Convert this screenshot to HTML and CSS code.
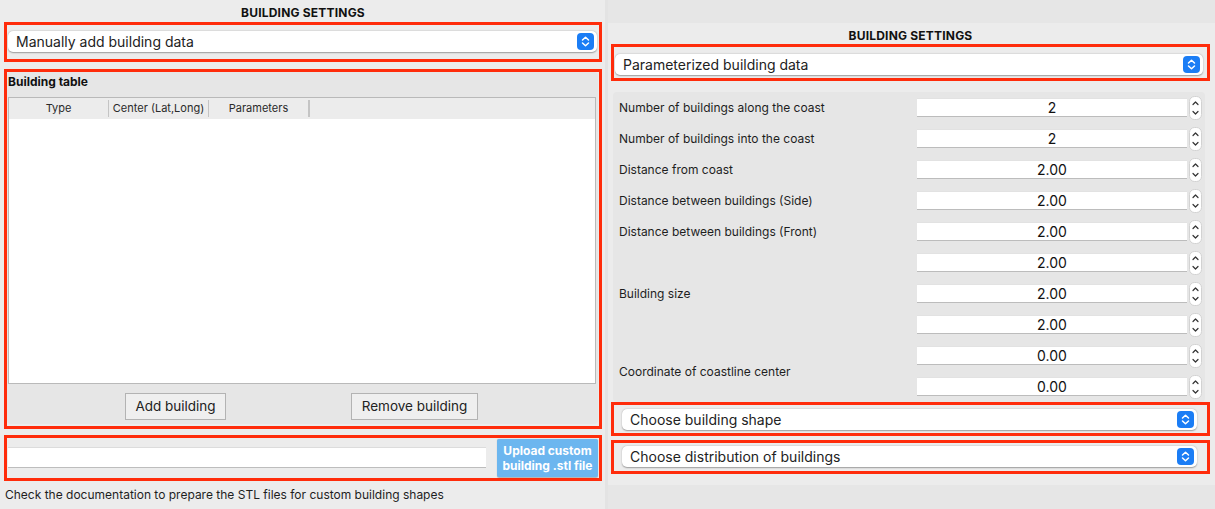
FILE: index.html
```html
<!DOCTYPE html>
<html>
<head>
<meta charset="utf-8">
<link rel="stylesheet" href="styles.css">
</head>
<body>
<div class="left">
  <div class="title">BUILDING SETTINGS</div>
  <div class="red r1">
    <div class="combo c-left"><span>Manually add building data</span>
      <svg class="cbtn" viewBox="0 0 17 17"><rect width="17" height="17" rx="4" fill="#1b7df5"/><path d="M5.5 7 L8.5 4.2 L11.5 7 M5.5 10 L8.5 12.8 L11.5 10" fill="none" stroke="#fff" stroke-width="1.5" stroke-linecap="round" stroke-linejoin="round"/></svg>
    </div>
  </div>
  <div class="red r2">
    <div class="group">
      <div class="gtitle">Building table</div>
      <div class="table">
        <div class="thead">
          <div class="th">Type</div>
          <div class="th">Center (Lat,Long)</div>
          <div class="th">Parameters</div>
          <div class="th last"></div>
        </div>
        <div class="tbody"></div>
      </div>
      <div class="btns">
        <button class="btn b-add">Add building</button>
        <button class="btn b-rem">Remove building</button>
      </div>
    </div>
  </div>
  <div class="red r3">
    <div class="field"></div>
    <button class="upload">Upload custom<br>building .stl file</button>
  </div>
  <div class="caption">Check the documentation to prepare the STL files for custom building shapes</div>
</div>
<div class="sep"></div>
<div class="right">
  <div class="panel">
    <div class="title t2">BUILDING SETTINGS</div>
    <div class="red r4">
      <div class="combo c-right"><span>Parameterized building data</span>
        <svg class="cbtn" viewBox="0 0 17 17"><rect width="17" height="17" rx="4" fill="#1b7df5"/><path d="M5.5 7 L8.5 4.2 L11.5 7 M5.5 10 L8.5 12.8 L11.5 10" fill="none" stroke="#fff" stroke-width="1.5" stroke-linecap="round" stroke-linejoin="round"/></svg>
      </div>
    </div>
    <div class="form">
      <div class="lab">Number of buildings along the coast</div>
      <div class="spins"><div class="spin"><div class="sf">2</div><svg class="sa" viewBox="0 0 13 24"><rect x="0.5" y="0.5" width="12" height="23" rx="5" fill="#fff" stroke="#d2d2d2"/><path d="M4 8.5 L6.5 6 L9 8.5 M4 15.5 L6.5 18 L9 15.5" fill="none" stroke="#333" stroke-width="1.2" stroke-linecap="round" stroke-linejoin="round"/></svg></div></div>

      <div class="lab">Number of buildings into the coast</div>
      <div class="spins"><div class="spin"><div class="sf">2</div><svg class="sa" viewBox="0 0 13 24"><rect x="0.5" y="0.5" width="12" height="23" rx="5" fill="#fff" stroke="#d2d2d2"/><path d="M4 8.5 L6.5 6 L9 8.5 M4 15.5 L6.5 18 L9 15.5" fill="none" stroke="#333" stroke-width="1.2" stroke-linecap="round" stroke-linejoin="round"/></svg></div></div>

      <div class="lab">Distance from coast</div>
      <div class="spins"><div class="spin"><div class="sf">2.00</div><svg class="sa" viewBox="0 0 13 24"><rect x="0.5" y="0.5" width="12" height="23" rx="5" fill="#fff" stroke="#d2d2d2"/><path d="M4 8.5 L6.5 6 L9 8.5 M4 15.5 L6.5 18 L9 15.5" fill="none" stroke="#333" stroke-width="1.2" stroke-linecap="round" stroke-linejoin="round"/></svg></div></div>

      <div class="lab">Distance between buildings (Side)</div>
      <div class="spins"><div class="spin"><div class="sf">2.00</div><svg class="sa" viewBox="0 0 13 24"><rect x="0.5" y="0.5" width="12" height="23" rx="5" fill="#fff" stroke="#d2d2d2"/><path d="M4 8.5 L6.5 6 L9 8.5 M4 15.5 L6.5 18 L9 15.5" fill="none" stroke="#333" stroke-width="1.2" stroke-linecap="round" stroke-linejoin="round"/></svg></div></div>

      <div class="lab">Distance between buildings (Front)</div>
      <div class="spins"><div class="spin"><div class="sf">2.00</div><svg class="sa" viewBox="0 0 13 24"><rect x="0.5" y="0.5" width="12" height="23" rx="5" fill="#fff" stroke="#d2d2d2"/><path d="M4 8.5 L6.5 6 L9 8.5 M4 15.5 L6.5 18 L9 15.5" fill="none" stroke="#333" stroke-width="1.2" stroke-linecap="round" stroke-linejoin="round"/></svg></div></div>

      <div class="lab">Building size</div>
      <div class="spins">
        <div class="spin"><div class="sf">2.00</div><svg class="sa" viewBox="0 0 13 24"><rect x="0.5" y="0.5" width="12" height="23" rx="5" fill="#fff" stroke="#d2d2d2"/><path d="M4 8.5 L6.5 6 L9 8.5 M4 15.5 L6.5 18 L9 15.5" fill="none" stroke="#333" stroke-width="1.2" stroke-linecap="round" stroke-linejoin="round"/></svg></div>
        <div class="spin"><div class="sf">2.00</div><svg class="sa" viewBox="0 0 13 24"><rect x="0.5" y="0.5" width="12" height="23" rx="5" fill="#fff" stroke="#d2d2d2"/><path d="M4 8.5 L6.5 6 L9 8.5 M4 15.5 L6.5 18 L9 15.5" fill="none" stroke="#333" stroke-width="1.2" stroke-linecap="round" stroke-linejoin="round"/></svg></div>
        <div class="spin"><div class="sf">2.00</div><svg class="sa" viewBox="0 0 13 24"><rect x="0.5" y="0.5" width="12" height="23" rx="5" fill="#fff" stroke="#d2d2d2"/><path d="M4 8.5 L6.5 6 L9 8.5 M4 15.5 L6.5 18 L9 15.5" fill="none" stroke="#333" stroke-width="1.2" stroke-linecap="round" stroke-linejoin="round"/></svg></div>
      </div>

      <div class="lab">Coordinate of coastline center</div>
      <div class="spins">
        <div class="spin"><div class="sf">0.00</div><svg class="sa" viewBox="0 0 13 24"><rect x="0.5" y="0.5" width="12" height="23" rx="5" fill="#fff" stroke="#d2d2d2"/><path d="M4 8.5 L6.5 6 L9 8.5 M4 15.5 L6.5 18 L9 15.5" fill="none" stroke="#333" stroke-width="1.2" stroke-linecap="round" stroke-linejoin="round"/></svg></div>
        <div class="spin"><div class="sf">0.00</div><svg class="sa" viewBox="0 0 13 24"><rect x="0.5" y="0.5" width="12" height="23" rx="5" fill="#fff" stroke="#d2d2d2"/><path d="M4 8.5 L6.5 6 L9 8.5 M4 15.5 L6.5 18 L9 15.5" fill="none" stroke="#333" stroke-width="1.2" stroke-linecap="round" stroke-linejoin="round"/></svg></div>
      </div>
    </div>
    <div class="red r5">
      <div class="combo c-small"><span>Choose building shape</span>
        <svg class="cbtn" viewBox="0 0 17 17"><rect width="17" height="17" rx="4" fill="#1b7df5"/><path d="M5.5 7 L8.5 4.2 L11.5 7 M5.5 10 L8.5 12.8 L11.5 10" fill="none" stroke="#fff" stroke-width="1.5" stroke-linecap="round" stroke-linejoin="round"/></svg>
      </div>
    </div>
    <div class="red r6">
      <div class="combo c-small"><span>Choose distribution of buildings</span>
        <svg class="cbtn" viewBox="0 0 17 17"><rect width="17" height="17" rx="4" fill="#1b7df5"/><path d="M5.5 7 L8.5 4.2 L11.5 7 M5.5 10 L8.5 12.8 L11.5 10" fill="none" stroke="#fff" stroke-width="1.5" stroke-linecap="round" stroke-linejoin="round"/></svg>
      </div>
    </div>
  </div>
</div>
</body>
</html>
```

FILE: styles.css
```css
* { box-sizing: border-box; }
html, body { margin: 0; padding: 0; }
body {
  width: 1215px;
  height: 509px;
  overflow: hidden;
  background: #e6e6e6;
  display: flex;
  font-family: Inter, "Liberation Sans", sans-serif;
  color: #1e1e1e;
}
.left {
  width: 605px;
  height: 509px;
  background: #ececec;
  display: flex;
  flex-direction: column;
  padding: 0 3px 0 4px;
}
.sep {
  width: 3px;
  background: #e3e3e3;
}
.right {
  flex: 1;
  padding-top: 23px;
}
.panel {
  height: 462px;
  background: #ececec;
  padding: 0 5px 0 3px;
  display: flex;
  flex-direction: column;
}
.title {
  height: 22px;
  text-align: center;
  font-weight: 700;
  font-size: 12px;
  line-height: 26px;
  letter-spacing: 0.2px;
  color: #111;
}
.t2 { height: 21px; line-height: 26px; }
.red { border: 3px solid #ff2c0b; }
.r1 { height: 40px; padding: 6px 2px 0 1px; }
.combo {
  height: 21px;
  background: #fff;
  border-radius: 5px;
  box-shadow: 0 0.5px 1.5px rgba(0,0,0,0.35);
  display: flex;
  align-items: center;
  justify-content: space-between;
  padding: 0 3px 0 8px;
  font-size: 14px;
  color: #222;
}
.cbtn { width: 17px; height: 17px; }
.r2 { height: 360px; margin-top: 7px; padding: 0; }
.group {
  height: 352px;
  margin: 0 1px 0 0;
  background: #e6e6e6;
  border-radius: 4px;
  padding: 0 0 0 1px;
  display: flex;
  flex-direction: column;
}
.gtitle {
  font-weight: 700;
  font-size: 12px;
  height: 25px;
  line-height: 20px;
  color: #111;
}
.table {
  width: 588px;
  height: 287px;
  border: 1px solid #b9b9b9;
  background: #fff;
  display: flex;
  flex-direction: column;
}
.thead {
  height: 21px;
  background: #ececec;
  display: flex;
  align-items: center;
}
.th {
  width: 100px;
  height: 17px;
  border-right: 1px solid #c4c4c4;
  font-size: 11px;
  line-height: 17px;
  text-align: center;
  color: #2a2a2a;
}
.th.last { width: 0; }
.tbody { flex: 1; background: #fff; }
.btns {
  display: flex;
  height: 40px;
  align-items: center;
  padding-top: 4px;
}
.btn {
  font-family: inherit;
  font-size: 13.5px;
  color: #222;
  background: #efefef;
  border: 1px solid #b3b3b3;
  border-radius: 0;
  height: 27px;
  padding: 0;
}
.b-add { width: 101px; margin-left: 117px; }
.b-rem { width: 127px; margin-left: 125px; }
.r3 {
  height: 46px;
  margin-top: 6px;
  display: flex;
  align-items: center;
  padding: 0 1px 0 1px;
}
.field {
  width: 478px;
  height: 21px;
  background: #fff;
  border-top: 1px solid #dcdcdc;
  border-bottom: 1px solid #bdbdbd;
  margin-top: -1px;
}
.upload {
  margin-left: 11px;
  width: 101px;
  height: 38px;
  background: #6cb6ef;
  border: none;
  border-radius: 2px;
  color: #fff;
  font-family: inherit;
  font-weight: 700;
  font-size: 12px;
  line-height: 15px;
  padding: 0;
  box-shadow: 0 0.5px 1px rgba(0,0,0,0.25);
}
.caption {
  font-size: 12px;
  margin-left: 1px;
  margin-top: 6px;
  color: #1e1e1e;
}
.r4 { height: 37px; padding: 7px 4px 0 1px; }
.r4 .combo { height: 21px; }
.form {
  margin: 11px 5px 0 2px;
  height: 310px;
  background: #e6e6e6;
  border-radius: 4px;
  display: grid;
  grid-template-columns: 298px 1fr;
  padding: 0 0 0 6px;
  row-gap: 0;
}
.lab {
  font-size: 12px;
  display: flex;
  align-items: center;
  color: #1e1e1e;
}
.spins { display: flex; flex-direction: column; }
.spin {
  height: 31px;
  display: flex;
  align-items: center;
}
.sf {
  width: 270px;
  height: 19px;
  background: #fff;
  border-bottom: 1px solid #bcbcbc;
  border-top: 1px solid #e2e2e2;
  text-align: center;
  font-size: 14px;
  line-height: 18px;
  color: #111;
}
.sa { width: 13px; height: 24px; margin-left: 2px; }
.r5 { height: 34px; margin-top: 0; padding: 4px 10px 0 8px; }
.r6 { height: 34px; margin-top: 4px; padding: 3px 10px 0 8px; }
.c-small { height: 21px; }
```
